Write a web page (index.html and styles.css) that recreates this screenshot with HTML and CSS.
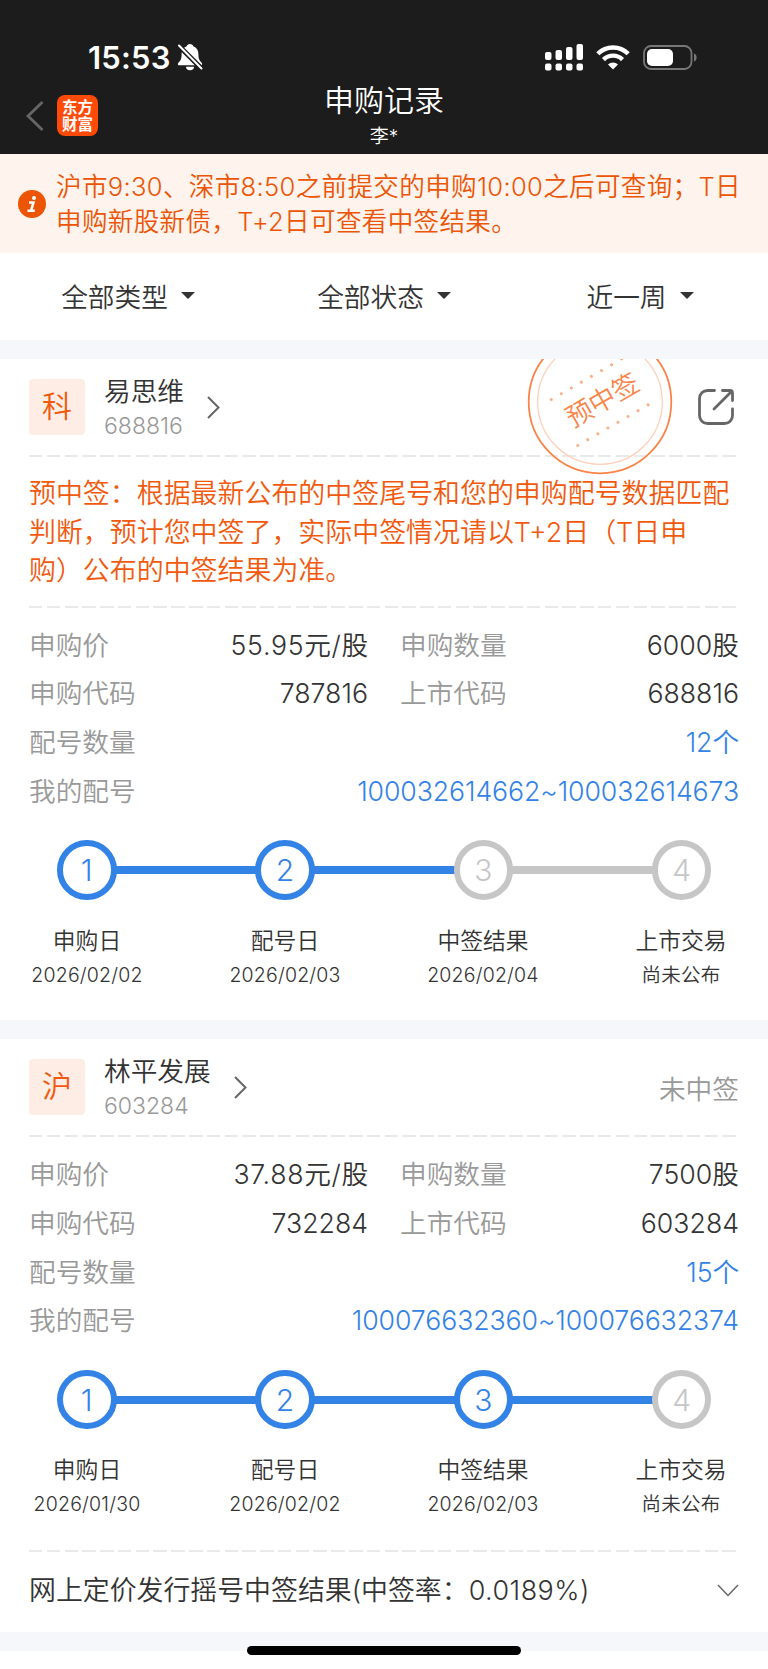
FILE: index.html
```html
<!DOCTYPE html>
<html lang="zh-CN">
<head>
  <meta charset="UTF-8">
  <title>申购记录</title>
  <meta name="viewport" content="width=device-width, initial-scale=1">
  <link rel="stylesheet" href="styles.css">
</head>
<body>
  <header class="topbar">
    <div class="status">
      <div class="status-left">
        <span class="clock">15:53</span>
        <svg class="bell" viewBox="0 0 26 28">
          <path fill="#fff" d="M13 1c-1.700 0-2.900 1-3.300 2.200C6.300 4.500 4.600 7.400 4.600 11c0 5-1 6.500-3 8.400-1.300 1.300-.8 2.900 1 2.900h20.800c1.800 0 2.300-1.600 1-2.900-2-1.900-3-3.400-3-8.400 0-3.600-1.700-6.500-5.100-7.800C15.900 2 14.700 1 13 1zM9 23.800a4 3.400 0 0 0 8 0z"/>
          <path stroke="#1c1c1c" stroke-width="5" d="M0 1l26 26"/>
          <path stroke="#fff" stroke-width="2" stroke-linecap="round" d="M2 2.500l22.500 23"/>
        </svg>
      </div>
      <div class="status-right">
        <svg class="signal" viewBox="0 0 38 27" fill="#fff">
          <rect x="0" y="8" width="6.500" height="8" rx="2"/>
          <rect x="10.500" y="6" width="6.500" height="10" rx="2"/>
          <rect x="21" y="3" width="6.500" height="13" rx="2"/>
          <rect x="31.500" y="0" width="6.500" height="16" rx="2"/>
          <rect x="0" y="19.500" width="6.500" height="7" rx="2"/>
          <rect x="10.500" y="19.500" width="6.500" height="7" rx="2"/>
          <rect x="21" y="19.500" width="6.500" height="7" rx="2"/>
          <rect x="31.500" y="19.500" width="6.500" height="7" rx="2"/>
        </svg>
        <svg class="wifi" viewBox="0 0 34 25">
          <path fill="none" stroke="#fff" stroke-width="4.400" d="M1.800 8.800a21.500 21.500 0 0 1 30.400 0M7.500 14.600a13.400 13.400 0 0 1 19 0"/>
          <path fill="#fff" d="M17 24.500l-5-5a7 7 0 0 1 10 0z"/>
        </svg>
        <svg class="battery" viewBox="0 0 54 25">
          <rect x="1" y="1" width="47.500" height="23" rx="7" fill="none" stroke="#777" stroke-width="1.800"/>
          <rect x="4" y="4" width="26" height="17" rx="5" fill="#fff"/>
          <path fill="#777" d="M51 8.500c3.500 1 3.500 7 0 8z"/>
        </svg>
      </div>
    </div>
    <div class="nav">
      <div class="nav-side">
        <svg class="back" viewBox="0 0 18 30"><path fill="none" stroke="#666" stroke-width="2.800" d="M16.500 1L2 15l14.500 14"/></svg>
        <div class="logo"><span>东方</span><span>财富</span></div>
      </div>
      <div class="nav-title">
        <h1>申购记录</h1>
        <p>李*</p>
      </div>
      <div class="nav-side"></div>
    </div>
  </header>

  <div class="notice">
    <svg class="info" viewBox="0 0 28 28">
      <circle cx="14" cy="14" r="14" fill="#eb5505"/>
      <circle cx="16" cy="8" r="2" fill="#fff"/>
      <path fill="none" stroke="#fff" stroke-width="2.600" d="M11 12.500h4.400l-2.200 8M9.500 20.800h7.300"/>
    </svg>
    <p>沪市9:30、深市8:50之前提交的申购10:00之后可查询；T日<br>申购新股新债，T+2日可查看中签结果。</p>
  </div>

  <nav class="filters">
    <div class="filter">全部类型<i class="caret"></i></div>
    <div class="filter">全部状态<i class="caret"></i></div>
    <div class="filter">近一周<i class="caret"></i></div>
  </nav>

  <section class="card">
    <div class="card-head">
      <div class="market">科</div>
      <div class="stock">
        <h2>易思维</h2>
        <p>688816</p>
      </div>
      <svg class="arrow" viewBox="0 0 13 23"><path fill="none" stroke="#666" stroke-width="2" d="M1 1l10.500 10.500L1 22"/></svg>
      <svg class="share" viewBox="0 0 36 36">
        <path fill="none" stroke="#666" stroke-width="2.800" stroke-linecap="round" stroke-linejoin="round" d="M16.500 1.500H9.500a8 8 0 0 0-8 8v17a8 8 0 0 0 8 8h17a8 8 0 0 0 8-8v-6.500M24.500 1.500h7.500a2.500 2.500 0 0 1 2.500 2.500v7.500M33 3L16 20"/>
      </svg>
      <svg class="stamp" viewBox="0 0 146 146">
        <circle cx="73" cy="73" r="71.300" fill="none" stroke="#fa8448" stroke-width="1.800"/>
        <circle cx="73" cy="73" r="62.300" fill="none" stroke="#fdd0b8" stroke-width="1.300"/>
        <g transform="rotate(-30 73 73)">
          <path stroke="#fcae86" stroke-width="3" stroke-linecap="round" stroke-dasharray="0 11.600" d="M32 46.500h82M32 99.500h82"/>
          <text x="76" y="82" text-anchor="middle" class="stamp-text">预中签</text>
        </g>
      </svg>
    </div>
    <div class="dash"></div>
    <p class="tip">预中签：根据最新公布的中签尾号和您的申购配号数据匹配<br>判断，预计您中签了，实际中签情况请以T+2日（T日申<br>购）公布的中签结果为准。</p>
    <div class="dash"></div>
    <dl class="info-rows">
      <div class="info-row">
        <div class="pair"><dt>申购价</dt><dd class="price">55.95元/股</dd></div>
        <div class="pair"><dt>申购数量</dt><dd>6000股</dd></div>
      </div>
      <div class="info-row">
        <div class="pair"><dt>申购代码</dt><dd>787816</dd></div>
        <div class="pair"><dt>上市代码</dt><dd>688816</dd></div>
      </div>
      <div class="info-row"><div class="pair"><dt>配号数量</dt><dd class="link">12个</dd></div></div>
      <div class="info-row"><div class="pair"><dt>我的配号</dt><dd class="link">100032614662~100032614673</dd></div></div>
    </dl>
    <div class="track">
      <span class="dot done">1</span><i class="line done"></i>
      <span class="dot done">2</span><i class="line done"></i>
      <span class="dot">3</span><i class="line"></i>
      <span class="dot">4</span>
    </div>
    <div class="steps">
      <div class="step"><b>申购日</b><span>2026/02/02</span></div>
      <div class="step"><b>配号日</b><span>2026/02/03</span></div>
      <div class="step"><b>中签结果</b><span>2026/02/04</span></div>
      <div class="step"><b>上市交易</b><span>尚未公布</span></div>
    </div>
  </section>

  <section class="card">
    <div class="card-head">
      <div class="market">沪</div>
      <div class="stock">
        <h2>林平发展</h2>
        <p>603284</p>
      </div>
      <svg class="arrow" viewBox="0 0 13 23"><path fill="none" stroke="#666" stroke-width="2" d="M1 1l10.500 10.500L1 22"/></svg>
      <span class="result">未中签</span>
    </div>
    <div class="dash"></div>
    <dl class="info-rows">
      <div class="info-row">
        <div class="pair"><dt>申购价</dt><dd class="price">37.88元/股</dd></div>
        <div class="pair"><dt>申购数量</dt><dd>7500股</dd></div>
      </div>
      <div class="info-row">
        <div class="pair"><dt>申购代码</dt><dd>732284</dd></div>
        <div class="pair"><dt>上市代码</dt><dd>603284</dd></div>
      </div>
      <div class="info-row"><div class="pair"><dt>配号数量</dt><dd class="link">15个</dd></div></div>
      <div class="info-row"><div class="pair"><dt>我的配号</dt><dd class="link">100076632360~100076632374</dd></div></div>
    </dl>
    <div class="track">
      <span class="dot done">1</span><i class="line done"></i>
      <span class="dot done">2</span><i class="line done"></i>
      <span class="dot done">3</span><i class="line done"></i>
      <span class="dot">4</span>
    </div>
    <div class="steps">
      <div class="step"><b>申购日</b><span>2026/01/30</span></div>
      <div class="step"><b>配号日</b><span>2026/02/02</span></div>
      <div class="step"><b>中签结果</b><span>2026/02/03</span></div>
      <div class="step"><b>上市交易</b><span>尚未公布</span></div>
    </div>
    <div class="dash"></div>
    <div class="lottery">
      <span>网上定价发行摇号中签结果(中签率：<em>0.0189%)</em></span>
      <svg class="expand" viewBox="0 0 22 13"><path fill="none" stroke="#666" stroke-width="1.500" d="M1 1l10 10.500L21 1"/></svg>
    </div>
  </section>

  <div class="bottom"></div>
  <div class="home-bar"></div>
</body>
</html>
```
FILE: styles.css
```css
* {
  box-sizing: border-box;
  margin: 0;
  padding: 0;
}
body {
  font-family: Inter, 'Noto Sans CJK SC', sans-serif;
  font-weight: 350;
  font-size: 26.7px;
  color: #333;
  background: #fff;
  height: 1669px;
  overflow: hidden;
}
svg { display: block; flex: none; }
h1, h2, b { font-weight: 350; }
i, em { font-style: normal; }

/* status bar + nav */
.topbar {
  height: 154px;
  background: #1c1c1c;
  color: #fff;
}
.status {
  display: flex;
  justify-content: space-between;
  height: 82px;
  padding: 32px 71px 0 88px;
}
.status-left, .status-right {
  display: flex;
  align-items: center;
  height: 50px;
}
.clock {
  font-size: 31px;
  font-weight: 600;
  letter-spacing: 0.2px;
}
.bell { width: 26px; height: 28px; margin-left: 6px; }
.signal { width: 38px; height: 27px; }
.wifi { width: 34px; height: 25px; margin-left: 13px; }
.battery { width: 54px; height: 25px; margin-left: 13px; }
.nav {
  display: flex;
  justify-content: space-between;
}
.nav-side {
  display: flex;
  align-items: center;
  width: 200px;
  height: 67px;
  padding-left: 26px;
}
.back { width: 18px; height: 30px; }
.logo {
  display: flex;
  flex-direction: column;
  align-items: center;
  justify-content: center;
  width: 41px;
  height: 41px;
  margin-left: 13px;
  border-radius: 8px;
  background: #ff4a08;
  font-size: 15.5px;
  font-weight: 700;
  line-height: 17px;
}
.nav-title { text-align: center; }
.nav-title h1 {
  font-size: 30px;
  line-height: 36px;
}
.nav-title p {
  font-size: 19px;
  line-height: 38px;
}

.notice {
  display: flex;
  align-items: center;
  height: 99px;
  padding: 0 18px;
  background: #fff3ee;
  color: #eb5505;
}
.notice p {
  margin-left: 10px;
  font-size: 25.6px;
  line-height: 35px;
  letter-spacing: 0.3px;
  white-space: nowrap;
}
.info { width: 28px; height: 28px; }

.filters {
  display: grid;
  grid-template-columns: repeat(3, 1fr);
  height: 87px;
}
.filter {
  display: flex;
  align-items: center;
  justify-content: center;
  padding-bottom: 2px;
}
.caret {
  margin-left: 13px;
  border: 7px solid transparent;
  border-top-color: #333;
  border-bottom: 0;
}

.card {
  padding: 0 31px 0 29px;
  border-top: 19px solid #f6f7fa;
}
.card-head {
  position: relative;
  display: flex;
  align-items: center;
  height: 96px;
}
.market {
  width: 56px;
  height: 56px;
  border-radius: 4px;
  background: #fdede5;
  color: #f2590d;
  font-size: 30px;
  line-height: 55px;
  text-align: center;
}
.stock { margin-left: 19px; padding-top: 3px; }
.stock h2 {
  font-size: 26.7px;
  line-height: 35px;
}
.stock p {
  color: #999;
  font-size: 23px;
  line-height: 34px;
}
.arrow { width: 13px; height: 23px; margin-left: 23px; }
.share { width: 36px; height: 36px; margin: 0 3px 0 auto; }
.result { margin: 0 -2px 0 auto; color: #999; }

/* stamp hangs over the divider, its top is cut by the card edge */
.stamp {
  position: absolute;
  top: -30px;
  right: 64px;
  width: 146px;
  height: 146px;
  clip-path: inset(30px 0 0 0);
}
.stamp-text { font-size: 26.5px; fill: #fa8448; }

.dash {
  height: 2px;
  background: repeating-linear-gradient(90deg, #e9e9e9 0 13.5px, transparent 13.5px 17.78px);
}
.tip {
  padding: 18px 0 15px;
  color: #f2590d;
  font-size: 26.95px;
  line-height: 38.6px;
  white-space: nowrap;
}

.info-rows { padding-top: 13px; margin-right: -2px; }
.info-row { display: flex; gap: 32px; line-height: 48.6px; height: 48.6px; }
.pair {
  display: flex;
  flex: 1;
  justify-content: space-between;
  white-space: nowrap;
}
.pair dt { color: #999; }
.pair .link { color: #3382e6; letter-spacing: -0.1px; }
.price { letter-spacing: 0.7px; margin-right: -1px; }

.track {
  display: flex;
  align-items: center;
  margin: 25px 25.5px 0 28px;
}
.dot {
  width: 59.5px;
  height: 59.5px;
  border: 6px solid #c6c6c6;
  border-radius: 50%;
  color: #c6c6c6;
  font-size: 30px;
  font-weight: 300;
  line-height: 48px;
  text-align: center;
}
.dot.done { border-color: #3382e6; color: #3382e6; }
.line {
  flex: 1;
  height: 8px;
  margin: 1px -1px 0;
  background: #c6c6c6;
}
.line.done { background: #3382e6; }
.steps {
  display: flex;
  justify-content: space-between;
  margin: 25px -9px 0 -7px;
  padding-bottom: 27.5px;
}
.step {
  display: flex;
  flex-direction: column;
  width: 130px;
  text-align: center;
}
.step b { font-size: 22.8px; line-height: 32px; }
.step span { font-size: 19.5px; line-height: 36.3px; letter-spacing: 0.2px; }

.lottery {
  display: flex;
  align-items: center;
  justify-content: space-between;
  height: 80px;
  margin-right: -2px;
  padding-bottom: 7px;
  font-size: 26.9px;
}
.lottery em { letter-spacing: 0.5px; }
.expand { width: 22px; height: 13px; margin-top: 3px; }

.bottom {
  height: 19px;
  background: #f6f7fa;
}
.home-bar {
  position: fixed;
  left: 247px;
  bottom: 14px;
  width: 274px;
  height: 9px;
  border-radius: 5px;
  background: #000;
}
```
